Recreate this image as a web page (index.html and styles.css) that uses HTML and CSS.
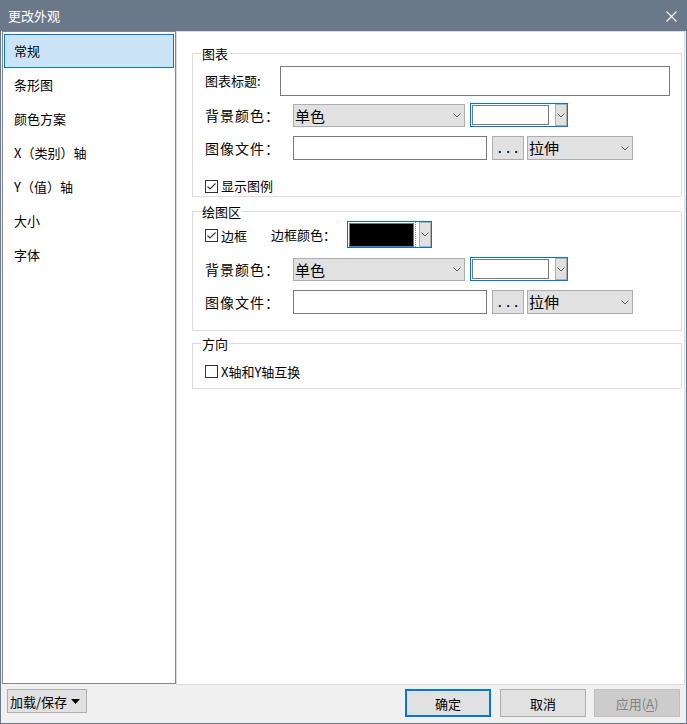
FILE: index.html
```html
<!DOCTYPE html>
<html>
<head>
<meta charset="utf-8">
<link rel="stylesheet" href="styles.css">
</head>
<body>
<div class="window">
  <div class="titlebar">
    <span class="title">更改外观</span>
    <svg class="close" width="11" height="11" viewBox="0 0 11 11"><path d="M0.5 0.5L10.5 10.5M10.5 0.5L0.5 10.5" stroke="#fff" stroke-width="1.1" fill="none"/></svg>
  </div>
  <div class="main">
    <ul class="nav">
      <li class="nav-item selected">常规</li>
      <li class="nav-item">条形图</li>
      <li class="nav-item">颜色方案</li>
      <li class="nav-item">X（类别）轴</li>
      <li class="nav-item">Y（值）轴</li>
      <li class="nav-item">大小</li>
      <li class="nav-item">字体</li>
    </ul>
    <div class="content">
      <fieldset class="group g1">
        <legend>图表</legend>
        <div class="row r-title">
          <span class="label title-label">图表标题:</span>
          <div class="textbox"></div>
        </div>
        <div class="row r-bg">
          <span class="label wide-label">背景颜色：</span>
          <div class="select sel-fill"><span>单色</span><svg class="chev" width="8" height="5" viewBox="0 0 8 5"><path d="M0.5 0.5L4 4L7.5 0.5" fill="none" stroke="#606060"/></svg></div>
          <div class="colorpicker cp-bg"><div class="swatch"></div><div class="cp-btn"><svg class="chev" width="8" height="5" viewBox="0 0 8 5"><path d="M0.5 0.5L4 4L7.5 0.5" fill="none" stroke="#606060"/></svg></div></div>
        </div>
        <div class="row r-img">
          <span class="label wide-label">图像文件：</span>
          <div class="textbox file-box"></div>
          <div class="btn-dots">...</div>
          <div class="select sel-stretch"><span>拉伸</span><svg class="chev" width="8" height="5" viewBox="0 0 8 5"><path d="M0.5 0.5L4 4L7.5 0.5" fill="none" stroke="#606060"/></svg></div>
        </div>
        <div class="row r-check">
          <span class="checkbox"><svg width="11" height="11" viewBox="0 0 11 11"><path d="M1.5 5.5L4 8L9.5 2.5" fill="none" stroke="#333" stroke-width="1.1"/></svg></span>
          <span class="check-label">显示图例</span>
        </div>
      </fieldset>

      <fieldset class="group g2">
        <legend>绘图区</legend>
        <div class="row r-border">
          <div class="check-item">
            <span class="checkbox"><svg width="11" height="11" viewBox="0 0 11 11"><path d="M1.5 5.5L4 8L9.5 2.5" fill="none" stroke="#333" stroke-width="1.1"/></svg></span>
            <span class="check-label">边框</span>
          </div>
          <span class="label border-label">边框颜色：</span>
          <div class="colorpicker cp-border"><div class="swatch black"></div><div class="dots-sep"></div><div class="cp-btn"><svg class="chev" width="8" height="5" viewBox="0 0 8 5"><path d="M0.5 0.5L4 4L7.5 0.5" fill="none" stroke="#606060"/></svg></div></div>
        </div>
        <div class="row r-bg r-bg2">
          <span class="label wide-label">背景颜色：</span>
          <div class="select sel-fill"><span>单色</span><svg class="chev" width="8" height="5" viewBox="0 0 8 5"><path d="M0.5 0.5L4 4L7.5 0.5" fill="none" stroke="#606060"/></svg></div>
          <div class="colorpicker cp-bg"><div class="swatch"></div><div class="cp-btn"><svg class="chev" width="8" height="5" viewBox="0 0 8 5"><path d="M0.5 0.5L4 4L7.5 0.5" fill="none" stroke="#606060"/></svg></div></div>
        </div>
        <div class="row r-img">
          <span class="label wide-label">图像文件：</span>
          <div class="textbox file-box"></div>
          <div class="btn-dots">...</div>
          <div class="select sel-stretch"><span>拉伸</span><svg class="chev" width="8" height="5" viewBox="0 0 8 5"><path d="M0.5 0.5L4 4L7.5 0.5" fill="none" stroke="#606060"/></svg></div>
        </div>
      </fieldset>

      <fieldset class="group g3">
        <legend>方向</legend>
        <div class="row r-check r-swap">
          <span class="checkbox"></span>
          <span class="check-label">X轴和Y轴互换</span>
        </div>
      </fieldset>
    </div>
  </div>
  <div class="footer">
    <div class="btn btn-load"><span>加载/保存</span><svg width="9" height="5" viewBox="0 0 9 5"><path d="M0 0H9L4.5 5Z" fill="#000"/></svg></div>
    <div class="spacer"></div>
    <div class="btn btn-main btn-ok">确定</div>
    <div class="btn btn-main btn-cancel">取消</div>
    <div class="btn btn-main btn-apply">应用(<u>A</u>)</div>
  </div>
</div>
</body>
</html>
```

FILE: styles.css
```css
* { box-sizing: border-box; }
html, body { margin: 0; padding: 0; }
body {
  width: 687px;
  height: 724px;
  overflow: hidden;
  font-family: "Noto Sans CJK SC", "Microsoft YaHei", sans-serif;
  font-size: 13px;
  color: #000;
}
.window {
  width: 687px;
  height: 724px;
  border: 1px solid #6a7889;
  background: #f0f0f0;
  display: flex;
  flex-direction: column;
}
.titlebar {
  height: 30px;
  flex: none;
  background: #6a7889;
  display: flex;
  align-items: center;
  justify-content: space-between;
  padding: 0 9px 0 7px;
  color: #fff;
}
.title { font-size: 13px; line-height: 16px; }
.close { display: block; }

.main { flex: 1; display: flex; min-height: 0; }
.nav {
  list-style: none;
  margin: 0 0 1px 1px;
  padding: 2px 1px;
  width: 174px;
  border: 1px solid #828790;
  background: #fff;
}
.nav-item {
  height: 34px;
  line-height: 31px;
  padding-left: 9px;
  border: 1px solid transparent;
  font-size: 13px;
}
.nav-item.selected { background: #cce4f7; border-color: #0078d7; }

.content {
  flex: 1;
  background: #fff;
  border: 1px solid #dcdcdc;
  margin-right: 1px;
  padding: 14px 2px 0 15px;
}
.group {
  margin: 0;
  padding: 0 11px 0 12px;
  border: 1px solid #dcdcdc;
  min-width: 0;
}
.group legend {
  padding: 0 1px;
  margin-left: -4px;
  height: 15px;
  line-height: 15px;
  font-size: 13px;
}
.g1 { padding-bottom: 3px; }
.g2 { margin-top: 7px; padding-bottom: 16px; }
.g3 { margin-top: 5px; padding-bottom: 10px; }

.row { display: flex; align-items: center; }
.label { flex: none; line-height: 16px; }
.title-label { width: 75px; }
.wide-label { width: 88px; font-size: 14px; letter-spacing: 1px; }
.border-label { width: 76px; }

.textbox { border: 1px solid #7a7a7a; background: #fff; }
.r-title { margin-top: 5px; height: 30px; }
.r-title .textbox { flex: 1; height: 30px; }

.r-bg { margin-top: 7px; height: 24px; }
.r-bg2 { margin-top: 9px; }
.select {
  background: #e1e1e1;
  border: 1px solid #adadad;
  display: flex;
  align-items: center;
  justify-content: space-between;
  padding: 0 3px 0 1px;
  font-size: 15px;
  line-height: 18px;
}
.chev { display: block; flex: none; }
.sel-fill { width: 172px; height: 23px; margin-top: 1px; }

.colorpicker {
  display: flex;
  align-items: center;
  background: #fff;
  border: 1px solid #0078d7;
  padding: 1px 0 1px 1px;
}
.cp-bg { margin-left: 5px; width: 98px; height: 24px; }
.swatch { width: 77px; height: 20px; border: 1px solid #7a7a7a; background: #fff; }
.cp-btn {
  margin-left: auto;
  width: 12px;
  height: 22px;
  background: #e1e1e1;
  border: 1px solid #adadad;
  display: flex;
  align-items: center;
  justify-content: center;
}
.cp-btn .chev { width: 8px; }

.r-img { margin-top: 9px; height: 24px; }
.file-box { width: 194px; height: 24px; }
.btn-dots {
  margin-left: 5px;
  width: 32px;
  height: 24px;
  background: #e1e1e1;
  border: 1px solid #adadad;
  font-size: 15px;
  line-height: 20px;
  letter-spacing: 4px;
  text-align: center;
  padding-left: 4px;
}
.sel-stretch { margin-left: 3px; width: 106px; height: 24px; }

.r-check { margin-top: 19px; height: 14px; }
.r-swap { margin-top: 14px; height: 13px; }
.checkbox {
  flex: none;
  width: 13px;
  height: 13px;
  border: 1px solid #333;
  background: #fff;
  display: flex;
  align-items: center;
  justify-content: center;
}
.checkbox svg { display: block; }
.check-label { margin-left: 3px; line-height: 16px; }

.r-border { margin-top: 2px; height: 27px; }
.check-item { display: flex; align-items: center; width: 66px; flex: none; margin-top: 2px; }
.cp-border {
  width: 85px;
  height: 27px;
  outline: 1px dotted #7a2fc8;
  outline-offset: -1px;
}
.swatch.black { width: 65px; height: 24px; background: #000; }
.dots-sep { width: 0; height: 25px; border-left: 1px dotted #8a8a8a; margin-left: 1px; }
.cp-border .cp-btn { width: 12px; height: 25px; margin-left: 3px; }

.footer {
  height: 38px;
  flex: none;
  display: flex;
  align-items: flex-start;
  padding: 4px 6px 0 6px;
}
.btn {
  background: #e1e1e1;
  border: 1px solid #adadad;
  font-size: 13px;
  display: flex;
  align-items: center;
  justify-content: center;
}
.btn-load { width: 80px; height: 24px; justify-content: space-between; padding: 0 6px 0 2px; }
.btn-load svg { display: block; }
.spacer { flex: 1; }
.btn-main { width: 86px; height: 28px; }
.btn-ok { border: 2px solid #0078d7; margin-right: 9px; }
.btn-cancel { margin-right: 8px; }
.btn-apply { background: #cccccc; border-color: #bfbfbf; color: #838383; }
.btn-apply u { text-underline-offset: 2px; }
```
